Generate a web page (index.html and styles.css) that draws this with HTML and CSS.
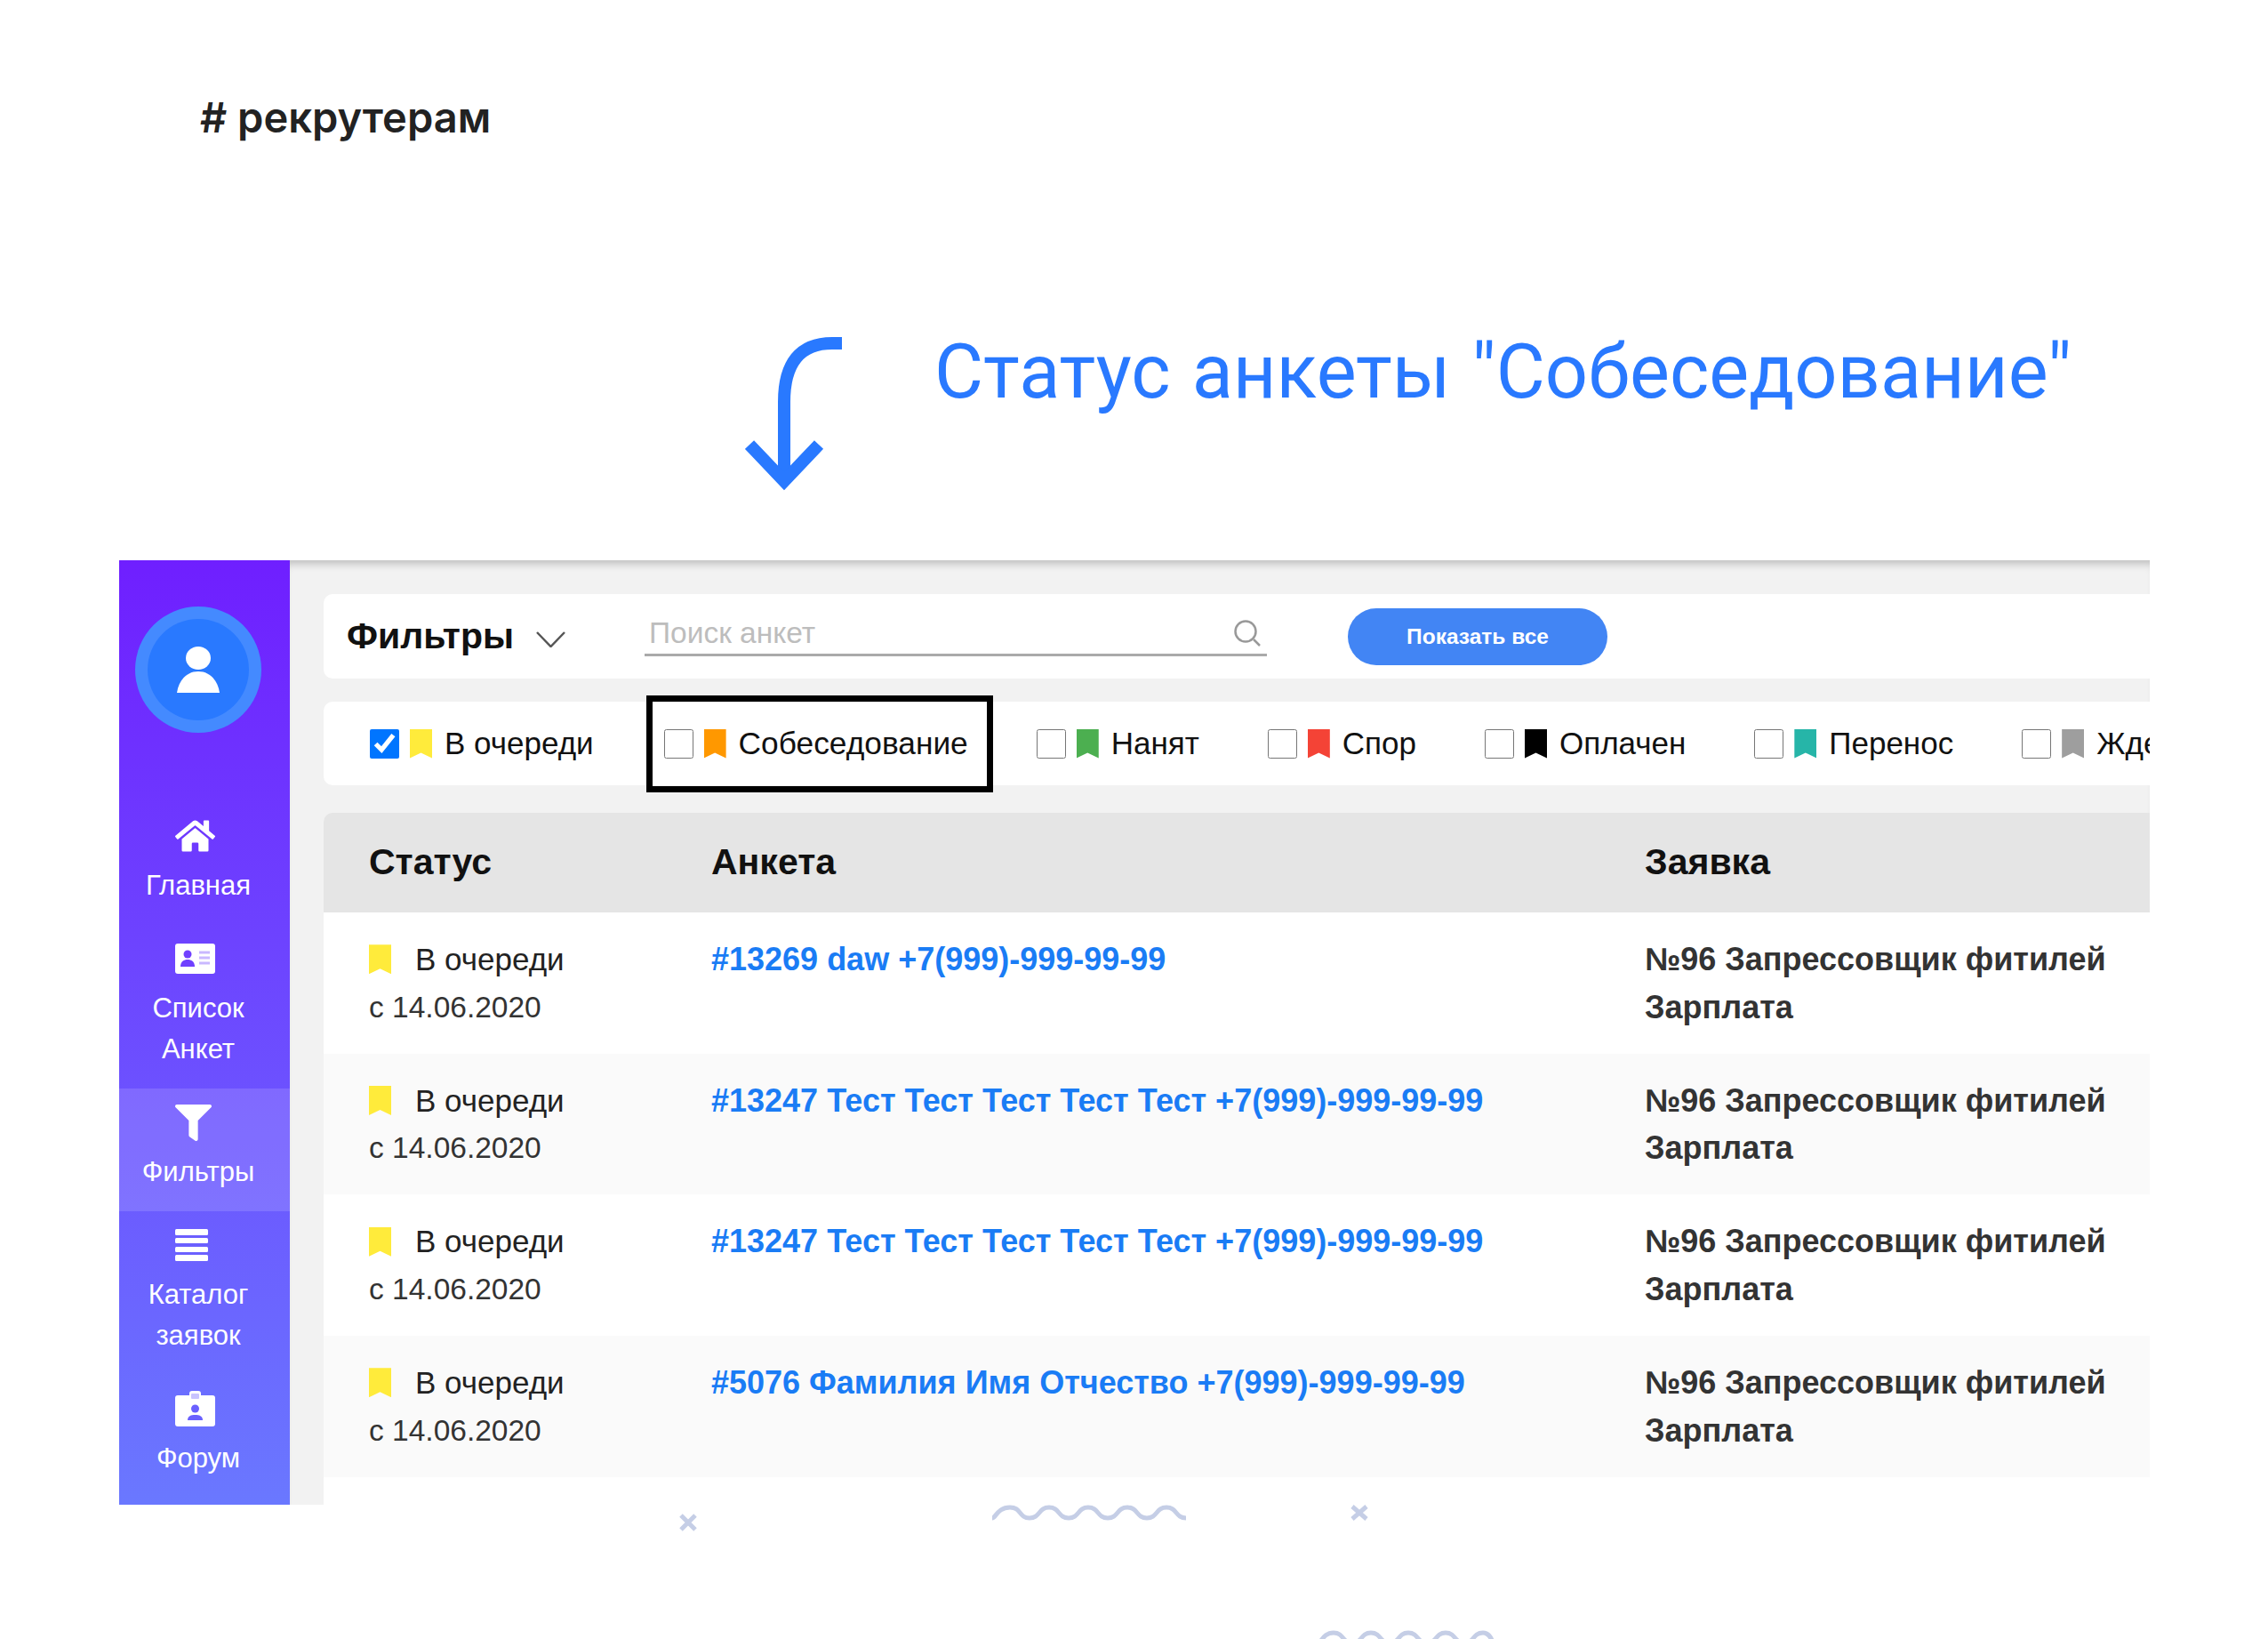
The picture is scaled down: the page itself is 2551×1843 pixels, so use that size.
FILE: index.html
```html
<!DOCTYPE html>
<html lang="ru">
<head>
  <meta charset="UTF-8" />
  <title>Статус анкеты</title>
  <link rel="stylesheet" href="styles.css">
</head>
<body>
  <p class="tag"># рекрутерам</p>

  <div class="hero">
    <svg class="hero-arrow" viewBox="0 0 110 182" width="110" height="182">
      <path d="M109 12 H98 C62 12 44 34 44 78 V166" />
      <path d="M5 126 L44 167 L83 126" />
    </svg>
    <h1>Статус анкеты "Собеседование"</h1>
  </div>

  <div class="app">
    <aside class="sidebar">
      <div class="avatar">
        <div class="avatar-inner">
          <svg viewBox="0 0 48 52" width="48" height="52">
            <ellipse cx="24" cy="13" rx="14" ry="13" fill="#fff" />
            <path d="M0 52 C2 38 11 28 24 28 C37 28 46 38 48 52 Z" fill="#fff" />
          </svg>
        </div>
      </div>
      <nav>
        <a class="nav-item" href="#">
          <span class="nav-icon">
            <svg viewBox="0 0 576 512" width="45" height="40"><path fill="#fff" d="M280.37 148.26L96 300.11V464a16 16 0 0 0 16 16l112.06-.29a16 16 0 0 0 15.92-16V368a16 16 0 0 1 16-16h64a16 16 0 0 1 16 16v95.64a16 16 0 0 0 16 16.05L464 480a16 16 0 0 0 16-16V300L295.67 148.26a12.19 12.19 0 0 0-15.3 0zM571.6 251.47L488 182.56V44.05a12 12 0 0 0-12-12h-56a12 12 0 0 0-12 12v72.61L318.47 43a48 48 0 0 0-61 0L4.34 251.47a12 12 0 0 0-1.6 16.9l25.5 31A12 12 0 0 0 45.15 301l235.22-193.74a12.19 12.19 0 0 1 15.3 0L530.9 301a12 12 0 0 0 16.9-1.6l25.5-31a12 12 0 0 0-1.7-16.93z"/></svg>
          </span>
          <span>Главная</span>
        </a>
        <a class="nav-item" href="#">
          <span class="nav-icon">
            <svg viewBox="0 0 45 34" width="45" height="34">
              <rect width="45" height="34" rx="3" fill="#fff" />
              <circle cx="14" cy="12" r="4.5" fill="#7040ff" />
              <path d="M6 26 C6 20 10 18 14 18 C18 18 22 20 22 26 Z" fill="#7040ff" />
              <path d="M27 10 H39 M27 16 H39 M27 22 H39" stroke="#c9b8ff" stroke-width="3" />
            </svg>
          </span>
          <span>Список<br>Анкет</span>
        </a>
        <a class="nav-item active" href="#">
          <span class="nav-icon">
            <svg viewBox="0 0 512 512" width="41" height="41"><path fill="#fff" d="M487.976 0H24.028C2.71 0-8.047 25.866 7.058 40.971L192 225.941V432c0 7.831 3.821 15.17 10.237 19.662l80 55.98C298.02 518.69 320 507.493 320 487.98V225.941l184.947-184.97C520.021 25.896 509.338 0 487.976 0z"/></svg>
          </span>
          <span>Фильтры</span>
        </a>
        <a class="nav-item" href="#">
          <span class="nav-icon">
            <svg viewBox="0 0 37 36" width="37" height="36">
              <rect width="37" height="7" rx="1.5" fill="#fff" />
              <rect y="10" width="37" height="6" rx="1.5" fill="#fff" />
              <rect y="20" width="37" height="6" rx="1.5" fill="#fff" />
              <rect y="29" width="37" height="7" rx="1.5" fill="#fff" />
            </svg>
          </span>
          <span>Каталог<br>заявок</span>
        </a>
        <a class="nav-item" href="#">
          <span class="nav-icon">
            <svg viewBox="0 0 45 40" width="45" height="40">
              <path d="M3 5 H16 V3 A3 3 0 0 1 19 0 H26 A3 3 0 0 1 29 3 V5 H42 A3 3 0 0 1 45 8 V37 A3 3 0 0 1 42 40 H3 A3 3 0 0 1 0 37 V8 A3 3 0 0 1 3 5 Z" fill="#fff" />
              <rect x="18" y="3" width="9" height="6" rx="1" fill="#c9c4ff" />
              <circle cx="22.5" cy="20" r="4.5" fill="#6a60ff" />
              <path d="M14 33 C14 28 18 27 22.5 27 C27 27 31 28 31 33 Z" fill="#6a60ff" />
            </svg>
          </span>
          <span>Форум</span>
        </a>
      </nav>
    </aside>

    <main class="content">
      <div class="card search-bar">
        <strong class="filter-title">Фильтры</strong>
        <svg class="chevron" viewBox="0 0 33 18" width="33" height="18">
          <path d="M1 1 L16.5 17 L32 1" />
        </svg>
        <div class="search">
          <input type="text" placeholder="Поиск анкет" />
          <svg viewBox="0 0 32 30" width="32" height="30">
            <circle cx="14" cy="13" r="11.5" />
            <path d="M23 22 L30 29" />
          </svg>
        </div>
        <button class="btn-show">Показать все</button>
      </div>

      <div class="card status-bar">
        <label class="status-item">
          <input type="checkbox" checked />
          <i class="mark yellow"></i>
          <span>В очереди</span>
        </label>
        <label class="status-item selected">
          <input type="checkbox" />
          <i class="mark orange"></i>
          <span>Собеседование</span>
        </label>
        <label class="status-item">
          <input type="checkbox" />
          <i class="mark green"></i>
          <span>Нанят</span>
        </label>
        <label class="status-item">
          <input type="checkbox" />
          <i class="mark red"></i>
          <span>Спор</span>
        </label>
        <label class="status-item">
          <input type="checkbox" />
          <i class="mark black"></i>
          <span>Оплачен</span>
        </label>
        <label class="status-item">
          <input type="checkbox" />
          <i class="mark teal"></i>
          <span>Перенос</span>
        </label>
        <label class="status-item">
          <input type="checkbox" />
          <i class="mark grey"></i>
          <span>Ждет</span>
        </label>
      </div>

      <div class="table">
        <div class="row head">
          <div>Статус</div>
          <div>Анкета</div>
          <div>Заявка</div>
        </div>
        <div class="row">
          <div>
            <div class="status-line"><i class="mark yellow"></i>В очереди</div>
            <div class="status-date">с 14.06.2020</div>
          </div>
          <div><a href="#">#13269 daw +7(999)-999-99-99</a></div>
          <div class="order">№96 Запрессовщик фитилей<br>Зарплата</div>
        </div>
        <div class="row">
          <div>
            <div class="status-line"><i class="mark yellow"></i>В очереди</div>
            <div class="status-date">с 14.06.2020</div>
          </div>
          <div><a href="#">#13247 Тест Тест Тест Тест Тест +7(999)-999-99-99</a></div>
          <div class="order">№96 Запрессовщик фитилей<br>Зарплата</div>
        </div>
        <div class="row">
          <div>
            <div class="status-line"><i class="mark yellow"></i>В очереди</div>
            <div class="status-date">с 14.06.2020</div>
          </div>
          <div><a href="#">#13247 Тест Тест Тест Тест Тест +7(999)-999-99-99</a></div>
          <div class="order">№96 Запрессовщик фитилей<br>Зарплата</div>
        </div>
        <div class="row">
          <div>
            <div class="status-line"><i class="mark yellow"></i>В очереди</div>
            <div class="status-date">с 14.06.2020</div>
          </div>
          <div><a href="#">#5076 Фамилия Имя Отчество +7(999)-999-99-99</a></div>
          <div class="order">№96 Запрессовщик фитилей<br>Зарплата</div>
        </div>
      </div>
      <div class="content-end"></div>
    </main>
  </div>

  <!-- decorative marks under the screenshot -->
  <div class="decor">
    <svg class="mark-x x-one" viewBox="0 0 20 20" width="20" height="20"><path d="M2 2 L18 18 M18 2 L2 18" /></svg>
    <svg class="wave wave-one" viewBox="0 0 222 18" width="222" height="18"><path d="M2 15 C6 15 8 3 22 3 C35 3 32 15 44 15 C56 15 54 3 66 3 C78 3 76 15 88 15 C100 15 98 3 110 3 C122 3 120 15 132 15 C144 15 142 3 154 3 C166 3 164 15 176 15 C188 15 186 3 198 3 C210 3 208 15 220 15" /></svg>
    <svg class="mark-x x-two" viewBox="0 0 20 18" width="20" height="18"><path d="M2 2 L18 16 M18 2 L2 16" /></svg>
    <svg class="wave wave-two" viewBox="0 0 202 18" width="202" height="18"><path d="M2 15 C6 15 8 3 20 3 C32 3 30 15 41 15 C52 15 50 3 62 3 C74 3 72 15 83 15 C94 15 92 3 104 3 C116 3 114 15 125 15 C136 15 134 3 146 3 C158 3 156 15 167 15 C178 15 176 3 188 3 C196 3 198 12 200 15" /></svg>
  </div>
</body>
</html>
```

FILE: styles.css
```css
*, *::before, *::after {
  box-sizing: border-box;
}
html, body {
  height: 1843px;
  overflow: hidden;
}
body {
  margin: 0;
  background: #fff;
  color: #222;
  font-family: 'Liberation Sans', Arial, sans-serif;
}
.tag {
  margin: 0;
  padding: 105px 0 0 225px;
  height: 200px;
  font-family: Inter, 'Noto Sans', sans-serif;
  font-size: 47px;
  font-weight: 600;
  line-height: 54px;
  color: #222;
}
.hero {
  display: flex;
  height: 430px;
  padding-left: 838px;
  gap: 103px;
}
.hero-arrow {
  margin-top: 174px;
  flex: none;
  fill: none;
}
.hero-arrow path {
  stroke: #2979ff;
  stroke-width: 14;
}
.hero h1 {
  margin: 0;
  padding-top: 168px;
  font-family: Roboto, sans-serif;
  font-size: 84.7px;
  font-weight: 400;
  word-spacing: 3px;
  line-height: 100px;
  color: #2979ff;
  white-space: nowrap;
}
.app {
  display: flex;
  margin-left: 134px;
  width: 2284px;
  height: 1062px;
  overflow: hidden;
}
.sidebar {
  flex: none;
  width: 192px;
  background: linear-gradient(180deg, #6f1fff 0%, #6a78ff 100%);
  color: #fff;
}
.avatar {
  width: 142px;
  height: 142px;
  margin: 52px 0 0 18px;
  padding: 14px;
  border-radius: 50%;
  background: #448aff;
}
.avatar-inner {
  display: flex;
  align-items: center;
  justify-content: center;
  width: 114px;
  height: 114px;
  border-radius: 50%;
  background: #2979ff;
}
nav {
  margin-top: 78px;
}
.nav-item {
  display: flex;
  flex-direction: column;
  padding: 18px 14px 21px 0;
  text-align: center;
  color: #fff;
  text-decoration: none;
  font-size: 31px;
  line-height: 46px;
}
.nav-item.active {
  background: rgba(255,255,255,0.14);
}
.nav-icon {
  display: flex;
  align-items: center;
  height: 40px;
  margin-bottom: 13px;
  padding-left: 63px;
}
.content {
  flex: 1;
  min-width: 0;
  display: flex;
  flex-direction: column;
  padding: 38px 0 0 38px;
  background: #f2f2f2;
  box-shadow: inset 0 10px 10px -6px rgba(0,0,0,0.22);
}
.card {
  background: #fff;
  border-radius: 10px 0 0 10px;
}
.search-bar {
  display: flex;
  align-items: center;
  height: 95px;
  padding-left: 26px;
}
.filter-title {
  font-size: 41px;
  color: #111;
}
.chevron {
  margin: 6px 0 0 25px;
  fill: none;
  stroke: #555;
  stroke-width: 2.5;
}
.search {
  display: flex;
  align-items: center;
  align-self: flex-start;
  width: 700px;
  height: 54px;
  margin: 16px 91px 0 89px;
  padding: 4px 6px 0 5px;
  border-bottom: 3px solid #aaa;
}
.search input {
  flex: 1;
  min-width: 0;
  border: none;
  outline: none;
  padding: 0;
  background: none;
  font-family: inherit;
  font-size: 33.5px;
}
.search input::placeholder {
  color: #bdbdbd;
}
.search svg {
  fill: none;
  stroke: #999;
  stroke-width: 2.5;
}
.btn-show {
  width: 292px;
  height: 64px;
  border: none;
  border-radius: 32px;
  background: #4285f4;
  color: #fff;
  font-family: inherit;
  font-size: 24.5px;
  font-weight: 700;
}
.status-bar {
  display: flex;
  align-items: center;
  gap: 77px;
  height: 94px;
  margin-top: 26px;
  padding-left: 52px;
  white-space: nowrap;
}
.status-item {
  display: flex;
  flex: none;
  align-items: center;
  font-size: 35px;
  color: #111;
}
.status-item input {
  width: 33px;
  height: 33px;
  margin: 0 12px 0 0;
}
.status-item .mark {
  margin-right: 14px;
}
.status-item.selected {
  height: 109px;
  margin: 0 -28px 0 -18px;
  padding: 0 21px 0 13px;
  border: 7px solid #000;
  font-size: 35.3px;
}
.mark {
  display: block;
  flex: none;
  width: 25px;
  height: 33px;
  clip-path: polygon(0 0, 100% 0, 100% 100%, 50% 82%, 0 100%);
}
.yellow { background: #ffeb3b; }
.orange { background: #ff9800; }
.green { background: #4caf50; }
.red { background: #f44336; }
.black { background: #000; }
.teal { background: #26b5a8; }
.grey { background: #9e9e9e; }
.table {
  margin-top: 31px;
  flex: none;
}
.row {
  display: grid;
  grid-template-columns: 385px 1050px 1fr;
  height: 158.7px;
  padding: 26px 0 0 51px;
  background: #fff;
  font-size: 36px;
  line-height: 53.5px;
  color: #333;
}
.row:nth-child(odd) {
  background: #fafafa;
}
.row.head {
  align-items: center;
  height: 112px;
  padding-top: 0;
  border-radius: 10px 0 0 0;
  background: #e5e5e5;
  font-size: 41px;
  font-weight: 700;
  color: #111;
}
.status-line {
  display: flex;
  align-items: center;
  font-size: 35px;
  color: #222;
}
.status-line .mark {
  margin-right: 27px;
}
.status-date {
  font-size: 33.5px;
}
.row a {
  color: #1a7cf5;
  font-weight: 700;
  text-decoration: none;
}
.order {
  font-weight: 700;
  white-space: nowrap;
}
.content-end {
  flex: 1;
  background: #fff;
}
.decor {
  position: relative;
  height: 151px;
  background: #fff;
}
.decor svg {
  position: absolute;
  fill: none;
  stroke: #c5cee6;
  stroke-width: 5;
}
.x-one { left: 764px; top: 10px; }
.wave-one { left: 1114px; top: 0; }
.x-two { left: 1519px; top: 0; }
.wave-two { left: 1480px; top: 141px; }
```
